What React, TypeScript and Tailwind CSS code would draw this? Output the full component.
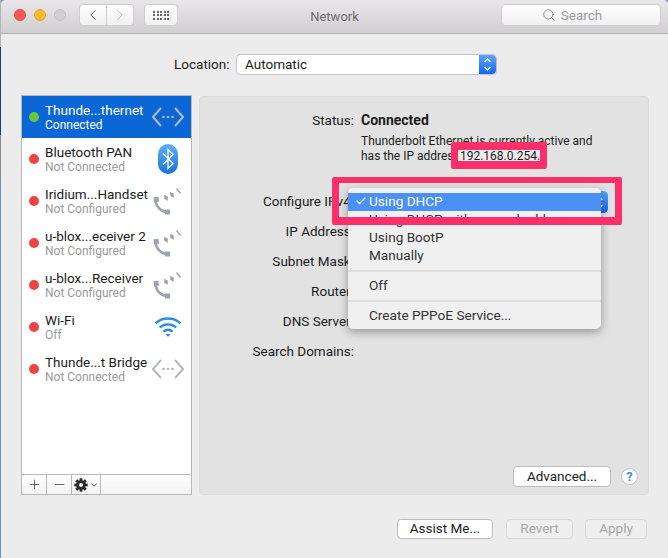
import React from 'react'
import { ChevronLeft, ChevronRight, Search, Plus, Minus, Check, ChevronDown } from 'lucide-react'

const font = { fontFamily: 'Roboto, "Liberation Sans", sans-serif' }

function EthernetIcon() {
    return (
        <svg width="32" height="22" viewBox="0 0 32 22" fill="none">
            <path d="M9 2 L1 11 L9 20" stroke="#b3b8c4" strokeWidth="2" />
            <path d="M23 2 L31 11 L23 20" stroke="#b3b8c4" strokeWidth="2" />
            <circle cx="11.5" cy="11" r="1.3" fill="#b0b5c2" />
            <circle cx="16" cy="11" r="1.3" fill="#b0b5c2" />
            <circle cx="20.5" cy="11" r="1.3" fill="#b0b5c2" />
        </svg>
    )
}

function BluetoothIcon() {
    return (
        <svg width="20" height="30" viewBox="0 0 20 30" fill="none">
            <defs>
                <linearGradient id="bt" x1="0" y1="0" x2="0" y2="1">
                    <stop offset="0" stopColor="#5bb0f5" />
                    <stop offset="1" stopColor="#1a73e0" />
                </linearGradient>
            </defs>
            <rect x="0" y="0" width="20" height="30" rx="10" fill="url(#bt)" />
            <path d="M5 9.5 L15 19.5 L10 24.5 L10 5.5 L15 10.5 L5 20.5" stroke="#fff" strokeWidth="1.3" />
        </svg>
    )
}

function PhoneIcon() {
    return (
        <svg width="30" height="28" viewBox="0 0 30 28" fill="none" stroke="#9ea3b0">
            <path d="M3 11 C1.5 18 7 25 15.5 25.5" strokeWidth="2.6" />
            <path d="M3 10 L3.5 15" strokeWidth="5" />
            <path d="M12 25 L17 25" strokeWidth="5" />
            <path d="M11.5 8 L14.5 13.5" strokeWidth="1.4" />
            <path d="M17.5 5 L20.5 10.5" strokeWidth="1.4" />
            <path d="M23.5 1.5 L27.5 6.5" strokeWidth="1.4" />
            <circle cx="13" cy="10.7" r="2" fill="#9ea3b0" stroke="none" />
            <circle cx="19" cy="7.7" r="2" fill="#9ea3b0" stroke="none" />
        </svg>
    )
}

function WifiIcon() {
    return (
        <svg width="30" height="22" viewBox="0 0 30 24" fill="none">
            <path d="M1.5 8 C9 1 21 1 28.5 8" stroke="#2b8ae8" strokeWidth="2.6" />
            <path d="M6 12.5 C11 8 19 8 24 12.5" stroke="#2b8ae8" strokeWidth="2.6" />
            <path d="M10 17 C13 14.5 17 14.5 20 17" stroke="#2b8ae8" strokeWidth="2.6" />
            <path d="M12.5 20 L15 23 L17.5 20 C16 19 14 19 12.5 20 Z" fill="#2b8ae8" />
        </svg>
    )
}

function GearIcon() {
    return (
        <svg width="14" height="14" viewBox="0 0 14 14">
            <g fill="#2b2b2b">
                <circle cx="7" cy="7" r="4.8" />
                <rect x="5.6" y="0.3" width="2.8" height="13.4" />
                <rect x="0.3" y="5.6" width="13.4" height="2.8" />
                <rect x="5.6" y="0.3" width="2.8" height="13.4" transform="rotate(45 7 7)" />
                <rect x="5.6" y="0.3" width="2.8" height="13.4" transform="rotate(-45 7 7)" />
            </g>
            <circle cx="7" cy="7" r="2" fill="#f4f4f4" />
        </svg>
    )
}

function Stepper({ className }: { className: string }) {
    return (
        <div className={`flex flex-col items-center justify-center rounded-r-[4px] bg-gradient-to-b from-[#5ba4f8] to-[#1266f1] ${className}`}>
            <svg width="9" height="15" viewBox="0 0 9 15" fill="none" stroke="#fff" strokeWidth="1.4">
                <path d="M1.5 5 L4.5 2 L7.5 5" />
                <path d="M1.5 10 L4.5 13 L7.5 10" />
            </svg>
        </div>
    )
}

const services = [
    { name: 'Thunde...thernet', status: 'Connected', dot: 'bg-[#6cc63c]', icon: <EthernetIcon />, selected: true },
    { name: 'Bluetooth PAN', status: 'Not Connected', dot: 'bg-[#f04444]', icon: <BluetoothIcon /> },
    { name: 'Iridium...Handset', status: 'Not Configured', dot: 'bg-[#f04444]', icon: <PhoneIcon /> },
    { name: 'u-blox...eceiver 2', status: 'Not Configured', dot: 'bg-[#f04444]', icon: <PhoneIcon /> },
    { name: 'u-blox...Receiver', status: 'Not Configured', dot: 'bg-[#f04444]', icon: <PhoneIcon /> },
    { name: 'Wi-Fi', status: 'Off', dot: 'bg-[#f04444]', icon: <WifiIcon /> },
    { name: 'Thunde...t Bridge', status: 'Not Connected', dot: 'bg-[#f04444]', icon: <EthernetIcon /> },
]

const fields = ['IP Address:', 'Subnet Mask:', 'Router:', 'DNS Server:', 'Search Domains:']

export default function App() {
    return (
        <div className="flex h-[558px] w-[668px] overflow-hidden bg-[#7f9cc0] text-[13.5px] text-[#1c1c1c]" style={font}>
            {/* sliver of desktop left of the window */}
            <div className="flex w-px shrink-0 flex-col">
                <div className="h-[47px] bg-[#b5b5b5]" />
                <div className="h-[88px] bg-[#123f78]" />
                <div className="h-[45px] bg-[#8a8a8a]" />
                <div className="flex-1 bg-[#6f92bd]" />
            </div>

            <div className="relative flex h-full flex-1 flex-col rounded-t-[5px] bg-[#ececec]">
                {/* toolbar */}
                <div className="relative flex h-[34px] shrink-0 items-start rounded-t-[5px] border-b border-[#b1afb1] bg-gradient-to-b from-[#e8e6e8] to-[#d1cfd1] pl-[13px] pt-[4px]">
                    <div className="mt-[5px] flex gap-[8px]">
                        <div className="h-3 w-3 rounded-full border border-[#e2463f] bg-[#f8575a]" />
                        <div className="h-3 w-3 rounded-full border border-[#e1a32a] bg-[#fcbc2e]" />
                        <div className="h-3 w-3 rounded-full border border-[#c0bec0] bg-[#d0ced0]" />
                    </div>
                    <div className="ml-[13px] flex h-[22px]">
                        <div className="flex w-[28px] items-center justify-center rounded-l-[4px] border border-[#cfcdcf] bg-gradient-to-b from-white to-[#f0f0f0]">
                            <ChevronLeft size={18} strokeWidth={1.3} color="#555" />
                        </div>
                        <div className="flex w-[27px] items-center justify-center rounded-r-[4px] border border-l-0 border-[#cfcdcf] bg-gradient-to-b from-white to-[#f0f0f0]">
                            <ChevronRight size={18} strokeWidth={1.3} color="#b5b5b5" />
                        </div>
                    </div>
                    <div className="ml-[10px] grid h-[22px] w-[34px] grid-cols-[repeat(5,2px)] content-center justify-center gap-[1.5px] rounded-[4px] border border-[#cfcdcf] bg-gradient-to-b from-white to-[#f0f0f0]">
                        {Array.from({ length: 15 }).map((_, i) => (
                            <div key={i} className="h-[2px] w-[2px] bg-[#666]" />
                        ))}
                    </div>
                    <div className="absolute left-0 right-0 top-[9px] text-center text-[13px] leading-[15px] text-[#6e6c6e]">Network</div>
                    <div className="ml-auto mr-[7px] flex h-[22px] w-[160px] items-center justify-center gap-[5px] rounded-[4px] border border-[#cfcdcf] bg-gradient-to-b from-white to-[#f0f0f0] pr-[18px] text-[#9c9c9c]">
                        <Search size={14} strokeWidth={1.3} color="#6a6a6a" />
                        Search
                    </div>
                </div>

                {/* location */}
                <div className="ml-[173px] mt-[20px] flex h-[21px] items-center">
                    <span className="w-[62px]">Location:</span>
                    <div className="flex h-[21px] w-[261px] overflow-hidden rounded-[4px] border border-[#c4c4c4] bg-white">
                        <span className="flex-1 pl-[8px] leading-[19px]">Automatic</span>
                        <Stepper className="w-[17px]" />
                    </div>
                </div>

                <div className="ml-[20px] mt-[20px] flex h-[400px] gap-[7px]">
                    {/* service list */}
                    <div className="flex w-[171px] flex-col border border-[#b8b8b8] bg-white">
                        <div className="flex-1">
                            {services.map(s => (
                                <div key={s.name} className={`relative flex h-[42px] items-center pl-[7px] ${s.selected ? 'bg-[#0b67d6] text-white' : ''}`}>
                                    <div className={`h-[10px] w-[10px] shrink-0 rounded-full ${s.dot}`} />
                                    <div className="ml-[6px] pt-px leading-[14px]">
                                        <div className="whitespace-nowrap text-[13.5px]">{s.name}</div>
                                        <div className={`mt-px text-[12px] ${s.selected ? 'text-white' : 'text-[#9a9a9a]'}`}>{s.status}</div>
                                    </div>
                                    <div className="absolute right-[1px] top-0 flex h-full w-[44px] items-center justify-center">{s.icon}</div>
                                </div>
                            ))}
                        </div>
                        <div className="flex h-[20px] border-t border-[#b8b8b8] bg-gradient-to-b from-white to-[#f2f2f2]">
                            <div className="flex w-[25px] items-center justify-center border-r border-[#b8b8b8]">
                                <Plus size={15} strokeWidth={1.1} color="#222" />
                            </div>
                            <div className="flex w-[25px] items-center justify-center border-r border-[#b8b8b8]">
                                <Minus size={15} strokeWidth={1.1} color="#222" />
                            </div>
                            <div className="flex w-[29px] items-center justify-center gap-[1px] border-r border-[#b8b8b8]">
                                <GearIcon />
                                <ChevronDown size={10} strokeWidth={2} color="#333" />
                            </div>
                        </div>
                    </div>

                    {/* detail panel */}
                    <div className="relative mt-px h-[399px] w-[450px] rounded-[4px] border border-[#dcdcdc] bg-[#e2e2e2]">
                        <div className="mt-[16px] flex h-[16px] leading-[14px]">
                            <span className="w-[154px] text-right">Status:</span>
                            <span className="ml-[7px] text-[14px] font-bold">Connected</span>
                        </div>
                        <div className="ml-[161px] mt-[5px] w-[250px] text-[12px] leading-[15px]">
                            <div className="whitespace-nowrap">Thunderbolt Ethernet is currently active and</div>
                            <div className="whitespace-nowrap">has the IP addres</div>
                        </div>
                        <div className="mt-[27px] flex h-[22px] items-center">
                            <span className="w-[154px] pb-[2px] text-right">Configure IPv4:</span>
                            <div className="ml-[6px] flex h-[22px] w-[248px] justify-end overflow-hidden rounded-[4px] bg-white">
                                <Stepper className="w-[17px]" />
                            </div>
                        </div>
                        <div className="mt-[11px] flex flex-col gap-[14px]">
                            {fields.map(f => (
                                <div key={f} className="h-[16px] w-[154px] text-right leading-[14px]">{f}</div>
                            ))}
                        </div>

                        <div className="absolute right-[10px] top-[369px] flex items-center gap-[10px]">
                            <div className="flex h-[21px] w-[98px] items-center justify-center rounded-[4px] border border-[#bdbdbd] bg-white">Advanced...</div>
                            <div className="flex h-[17px] w-[17px] items-center justify-center rounded-full border border-[#c4c4c4] bg-white text-[13px] font-bold text-[#3a8ef0]">?</div>
                        </div>
                    </div>
                </div>

                {/* bottom buttons */}
                <div className="ml-[396px] mt-[24px] flex h-[20px] gap-[13px]">
                    <div className="flex w-[96px] items-center justify-center rounded-[4px] border border-[#bdbdbd] bg-white pb-[2px]">Assist Me...</div>
                    <div className="flex w-[67px] items-center justify-center rounded-[4px] border border-[#d8d8d8] bg-[#efefef] pb-[2px] text-[#a8a8a8]">Revert</div>
                    <div className="-ml-px flex w-[62px] items-center justify-center rounded-[4px] border border-[#d8d8d8] bg-[#efefef] pb-[2px] text-[#a8a8a8]">Apply</div>
                </div>

                {/* popup menu */}
                <div className="absolute left-[347px] top-[188px] h-[141px] w-[253px] rounded-[5px] bg-[#f0f0f0] pt-[5px] text-[13.6px] leading-[16px] text-[#333] shadow-[0_3px_10px_rgba(0,0,0,0.35)]">
                    <div className="flex h-[18px] items-center bg-[#4a90f5] pb-[2px] text-white">
                        <Check size={12} strokeWidth={2.4} className="ml-[5px] w-[16px]" />
                        <span>Using DHCP</span>
                    </div>
                    <div className="h-[18px] whitespace-nowrap pl-[21px]">Using DHCP with manual address</div>
                    <div className="h-[18px] pl-[21px]">Using BootP</div>
                    <div className="h-[18px] pl-[21px]">Manually</div>
                    <div className="my-[5px] h-[2px] bg-[#dfdfdf]" />
                    <div className="my-[2px] h-[18px] pl-[21px]">Off</div>
                    <div className="my-[5px] h-[2px] bg-[#dfdfdf]" />
                    <div className="h-[18px] pl-[21px]">Create PPPoE Service...</div>
                </div>

                {/* pink annotations */}
                <div className="absolute left-[450px] top-[142px] flex h-[27px] w-[96px] items-center justify-center rounded-[2px] border-[7px] border-y-[8px] border-[#fb2f6a] bg-[#ececec] pl-[2px] text-[12px]">
                    <span className="whitespace-nowrap">192.168.0.254.</span>
                </div>
                <div className="absolute left-[331px] top-[177px] h-[48px] w-[290px] rounded-[2px] border-[7px] border-t-[6px] border-b-[8px] border-[#fb2f6a]" />
            </div>
        </div>
    )
}
